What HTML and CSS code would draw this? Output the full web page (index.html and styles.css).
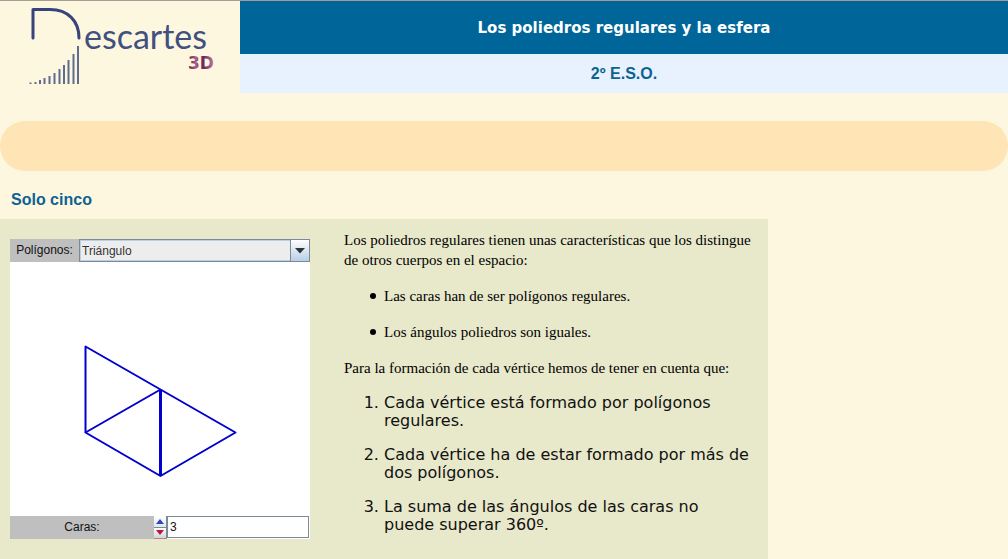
FILE: index.html
```html
<!DOCTYPE html>
<html lang="es">
<head>
<meta charset="utf-8">
<title>Los poliedros regulares y la esfera</title>
<link rel="stylesheet" href="styles.css">
</head>
<body>
<header class="header">
  <div class="brand">
    <svg class="logo" width="200" height="88" viewBox="0 0 200 88" role="img" aria-label="Descartes 3D">
      <defs>
        <linearGradient id="plum" x1="0" y1="0" x2="1" y2="0">
          <stop offset="0" stop-color="#471638"/><stop offset=".3" stop-color="#b0608f"/>
          <stop offset=".5" stop-color="#6b2450"/><stop offset=".65" stop-color="#7c2e60"/><stop offset="1" stop-color="#b982a2"/>
        </linearGradient>
      </defs>
      <path class="logo-d" d="M13 37V8.500h17C48 8.500 59 20 59 37"/>
      <path class="logo-bars" d="M10.500 83v-1.500M15.500 83v-2M20 83v-4M24.500 83v-6M29.500 83v-8M34.500 83v-11M39.500 83v-15M44 83v-19M48.500 83v-24M53.500 83v-30M58 83v-38"/>
      <text class="logo-name" x="64" y="48">escartes</text>
      <text class="logo-3d" x="168" y="68">3D</text>
    </svg>
  </div>
  <div class="titles">
    <h1 class="title">Los poliedros regulares y la esfera</h1>
    <p class="level">2º E.S.O.</p>
  </div>
</header>
<div class="band"></div>
<h2 class="section-title">Solo cinco</h2>
<main class="panel">
  <section class="applet">
    <div class="control">
      <label class="control-label" for="polygon">Polígonos:</label>
      <div class="combo">
        <select id="polygon" class="combo-select">
          <option>Triángulo</option>
          <option>Cuadrado</option>
          <option>Pentágono</option>
          <option>Hexágono</option>
        </select>
        <span class="combo-arrow"><svg width="12" height="6" viewBox="0 0 12 6"><path d="M1 0h10L6 5.500z" fill="#333"/></svg></span>
      </div>
    </div>
    <svg class="scene" viewBox="0 0 300 254" role="img" aria-label="Tres triángulos con un vértice común">
      <path d="M150.500 127.500V214" class="edge edge-thick"/>
      <path d="M150.500 127.500L75.500 84.500V170.500" class="edge"/>
      <path d="M150.500 127.500L225.500 170.500L150.500 214L75.500 170.500L150.500 127.500" class="edge"/>
    </svg>
    <div class="control">
      <label class="control-label control-label-wide" for="faces">Caras:</label>
      <div class="spinner">
        <button class="step" type="button" aria-label="Aumentar"><svg width="8" height="5" viewBox="0 0 8 5"><path d="M4 0l4 5H0z" fill="#2f43ba"/></svg></button>
        <button class="step step-down" type="button" aria-label="Disminuir"><svg width="8" height="5" viewBox="0 0 8 5"><path d="M0 0h8L4 5z" fill="#c3113e"/></svg></button>
      </div>
      <input id="faces" class="number" type="text" value="3">
    </div>
  </section>
  <article class="text">
    <p>Los poliedros regulares tienen unas características que los distingue de otros cuerpos en el espacio:</p>
    <ul class="facts">
      <li>Las caras han de ser polígonos regulares.</li>
      <li>Los ángulos poliedros son iguales.</li>
    </ul>
    <p>Para la formación de cada vértice hemos de tener en cuenta que:</p>
    <ol class="rules">
      <li>Cada vértice está formado por polígonos regulares.</li>
      <li>Cada vértice ha de estar formado por más de dos polígonos.</li>
      <li>La suma de las ángulos de las caras no puede superar 360º.</li>
    </ol>
  </article>
</main>
</body>
</html>
```
FILE: styles.css
```css
* { box-sizing: border-box; }
body {
  margin: 0;
  min-height: 100vh;
  display: flex;
  flex-direction: column;
  background: #fef7df;
  color: #111;
  font-family: "Liberation Sans", Arial, sans-serif;
}
.header {
  display: flex;
  border-top: 1px solid #a39d92;
}
.brand {
  flex: 0 0 240px;
  padding-left: 20px;
}
.logo { display: block; }
.logo-d { fill: none; stroke: #37447c; stroke-width: 3; stroke-linecap: round; stroke-linejoin: round; }
.logo-bars { fill: none; stroke: #606c8e; stroke-width: 2; }
.logo-name { font-family: Lato, sans-serif; font-size: 34px; fill: #40507f; }
.logo-3d { font-family: "DejaVu Sans", Verdana, sans-serif; font-size: 17px; font-weight: bold; fill: url(#plum); }
.titles { flex: 1; text-align: center; }
.title {
  margin: 0;
  padding: 17px 10px 16px;
  background: #006699;
  color: #fff;
  font: bold 15px/20px "DejaVu Sans", Verdana, sans-serif;
}
.level {
  margin: 0;
  padding: 10px 0 9px;
  background: #e8f2fe;
  color: #0d6293;
  font-size: 16px;
  font-weight: bold;
  line-height: 20px;
}
.band {
  height: 50px;
  margin-top: 28px;
  border-radius: 25px;
  background: #ffe4b5;
}
.section-title {
  margin: 19px 11px 9px;
  color: #0d6293;
  font-size: 16px;
  line-height: 20px;
}
.panel {
  flex: 1;
  width: 100%;
  max-width: 768px;
  padding: 11px 10px 10px;
  display: flex;
  align-items: flex-start;
  gap: 34px;
  background: #e8e8ca;
}
.applet {
  flex: 0 0 300px;
  min-width: 0;
  margin-top: 9px;
  background: #fff;
  font-size: 12px;
}
.control { display: flex; height: 23px; }
.control-label {
  flex: 0 0 69px;
  background: #bfbfbf;
  line-height: 23px;
  text-align: center;
}
.control-label-wide { flex-basis: 144px; }
.combo { flex: 1; display: grid; grid-template-columns: 1fr 20px; }
.combo-select {
  grid-area: 1 / 1 / 2 / 3;
  appearance: none;
  width: 100%;
  height: 23px;
  padding: 0 22px 0 2px;
  border: 1px solid #7a8a99;
  border-radius: 0;
  box-shadow: inset 0 0 0 1px #b8cfe5;
  background: #ededed;
  color: #333;
  font: 12px "Liberation Sans", Arial, sans-serif;
}
.combo-arrow {
  grid-area: 1 / 2;
  z-index: 1;
  display: flex;
  align-items: center;
  justify-content: center;
  border: 1px solid #7a8a99;
  background: linear-gradient(#fff, #dbe6f3 50%, #b8cfe5);
  pointer-events: none;
}
.scene { display: block; width: 100%; }
.edge { fill: none; stroke: #0000cf; stroke-width: 2; stroke-linejoin: round; }
.edge-thick { stroke-width: 3; }
.spinner { flex: 0 0 13px; display: flex; flex-direction: column; }
.step {
  flex: 1;
  display: flex;
  align-items: center;
  justify-content: center;
  padding: 0;
  border: 0;
  border-right: 1px solid #7a8a99;
  border-bottom: 1px solid #7a8a99;
  background: linear-gradient(#fff, #dce8f4);
}
.step-down { border-bottom-color: #c08080; background: linear-gradient(#fff, #ccd8d8); }
.number {
  flex: 1;
  min-width: 0;
  height: 22px;
  margin-right: 1px;
  padding: 0 2px;
  border: 1px solid #7a8a99;
  background: #fff;
  color: #111;
  font: 12px "Liberation Sans", Arial, sans-serif;
}
.text {
  flex: 1;
  min-width: 0;
  color: #000;
  font: 15px/20px "Liberation Serif", "Times New Roman", serif;
}
.text p, .text ul, .text ol { margin: 0 0 16px; }
.text ul, .text ol { padding-left: 40px; }
.text li { margin-bottom: 16px; }
.text .facts { list-style: none; }
.facts li::before {
  content: "";
  display: inline-block;
  width: 6px;
  height: 6px;
  margin: 0 8px 0 -14px;
  border-radius: 50%;
  background: #000;
  vertical-align: 2px;
}
.text .rules {
  margin-bottom: 0;
  padding-right: 6px;
  color: #111;
  font: 16px/18px "DejaVu Sans", Verdana, sans-serif;
}
.text .rules li:last-child { margin-bottom: 0; }
```
